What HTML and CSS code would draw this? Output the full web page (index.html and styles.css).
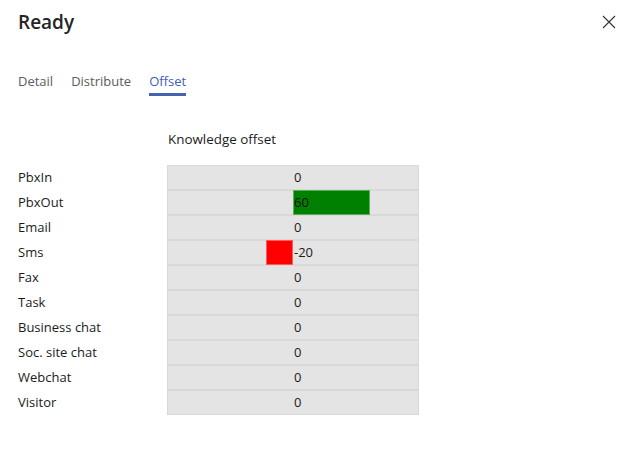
FILE: index.html
```html
<!DOCTYPE html>
<html lang="en">
<head>
  <meta charset="UTF-8" />
  <title>Ready</title>
  <link rel="stylesheet" href="styles.css">
</head>
<body>
  <div class="panel">
    <div class="header">
      <h1>Ready</h1>
      <button class="close" title="Close">
        <svg width="14" height="14" viewBox="0 0 14 14"><path d="M1 1L13 13M13 1L1 13" stroke="#333" stroke-width="1.1" fill="none"/></svg>
      </button>
    </div>

    <div class="tabs">
      <span class="tab">Detail</span>
      <span class="tab">Distribute</span>
      <span class="tab active">Offset</span>
    </div>

    <div class="offset-grid">
      <div></div>
      <div class="col-head">Knowledge offset</div>

      <div class="label">PbxIn</div>
      <div class="cell"><div class="neg"></div><div class="pos"><span class="val">0</span></div></div>

      <div class="label">PbxOut</div>
      <div class="cell"><div class="neg"></div><div class="pos"><span class="bar green" style="width:60%">60</span></div></div>

      <div class="label">Email</div>
      <div class="cell"><div class="neg"></div><div class="pos"><span class="val">0</span></div></div>

      <div class="label">Sms</div>
      <div class="cell"><div class="neg"><span class="bar red" style="width:20%"></span></div><div class="pos"><span class="val">-20</span></div></div>

      <div class="label">Fax</div>
      <div class="cell"><div class="neg"></div><div class="pos"><span class="val">0</span></div></div>

      <div class="label">Task</div>
      <div class="cell"><div class="neg"></div><div class="pos"><span class="val">0</span></div></div>

      <div class="label">Business chat</div>
      <div class="cell"><div class="neg"></div><div class="pos"><span class="val">0</span></div></div>

      <div class="label">Soc. site chat</div>
      <div class="cell"><div class="neg"></div><div class="pos"><span class="val">0</span></div></div>

      <div class="label">Webchat</div>
      <div class="cell"><div class="neg"></div><div class="pos"><span class="val">0</span></div></div>

      <div class="label">Visitor</div>
      <div class="cell"><div class="neg"></div><div class="pos"><span class="val">0</span></div></div>
    </div>
  </div>
</body>
</html>
```

FILE: styles.css
```css
body {
  margin: 0;
  background: white;
  font-family: "Open Sans", "Noto Sans", sans-serif;
  font-size: 13px;
  color: #1b1b1b;
}
.panel {
  padding: 8px 18px 0 18px;
}
.header {
  display: flex;
  justify-content: space-between;
  align-items: center;
  height: 28px;
}
h1 {
  margin: 0;
  font-size: 19px;
  font-weight: 600;
  color: #252525;
}
.close {
  background: none;
  border: none;
  padding: 0;
  width: 14px;
  height: 14px;
  cursor: pointer;
}
.tabs {
  display: flex;
  gap: 18px;
  margin-top: 36px;
}
.tab {
  color: #5c5c5c;
  font-size: 13px;
  padding-bottom: 3px;
  border-bottom: 3px solid transparent;
}
.tab.active {
  color: #3f5fb3;
  border-bottom-color: #4762ad;
}
.offset-grid {
  display: grid;
  grid-template-columns: 149px 252px;
  margin-top: 32px;
}
.col-head {
  padding: 2px 0 0 1px;
  height: 35px;
  font-size: 13.4px;
}
.label {
  height: 25px;
  line-height: 25px;
}
.cell {
  display: grid;
  grid-template-columns: 1fr 1fr;
  height: 23px;
  line-height: 23px;
  background: #e4e4e4;
  border: 1px solid #d9d9d9;
}
.neg {
  display: flex;
  justify-content: flex-end;
}
.pos {
  display: flex;
}
.val {
  padding-left: 1px;
}
.bar {
  display: block;
  height: 23px;
  margin: -1px 0;
  border: 1px solid rgba(255, 255, 255, 0.35);
  color: #111;
}
.green {
  background: #008000;
}
.red {
  background: #ff0000;
}
```
